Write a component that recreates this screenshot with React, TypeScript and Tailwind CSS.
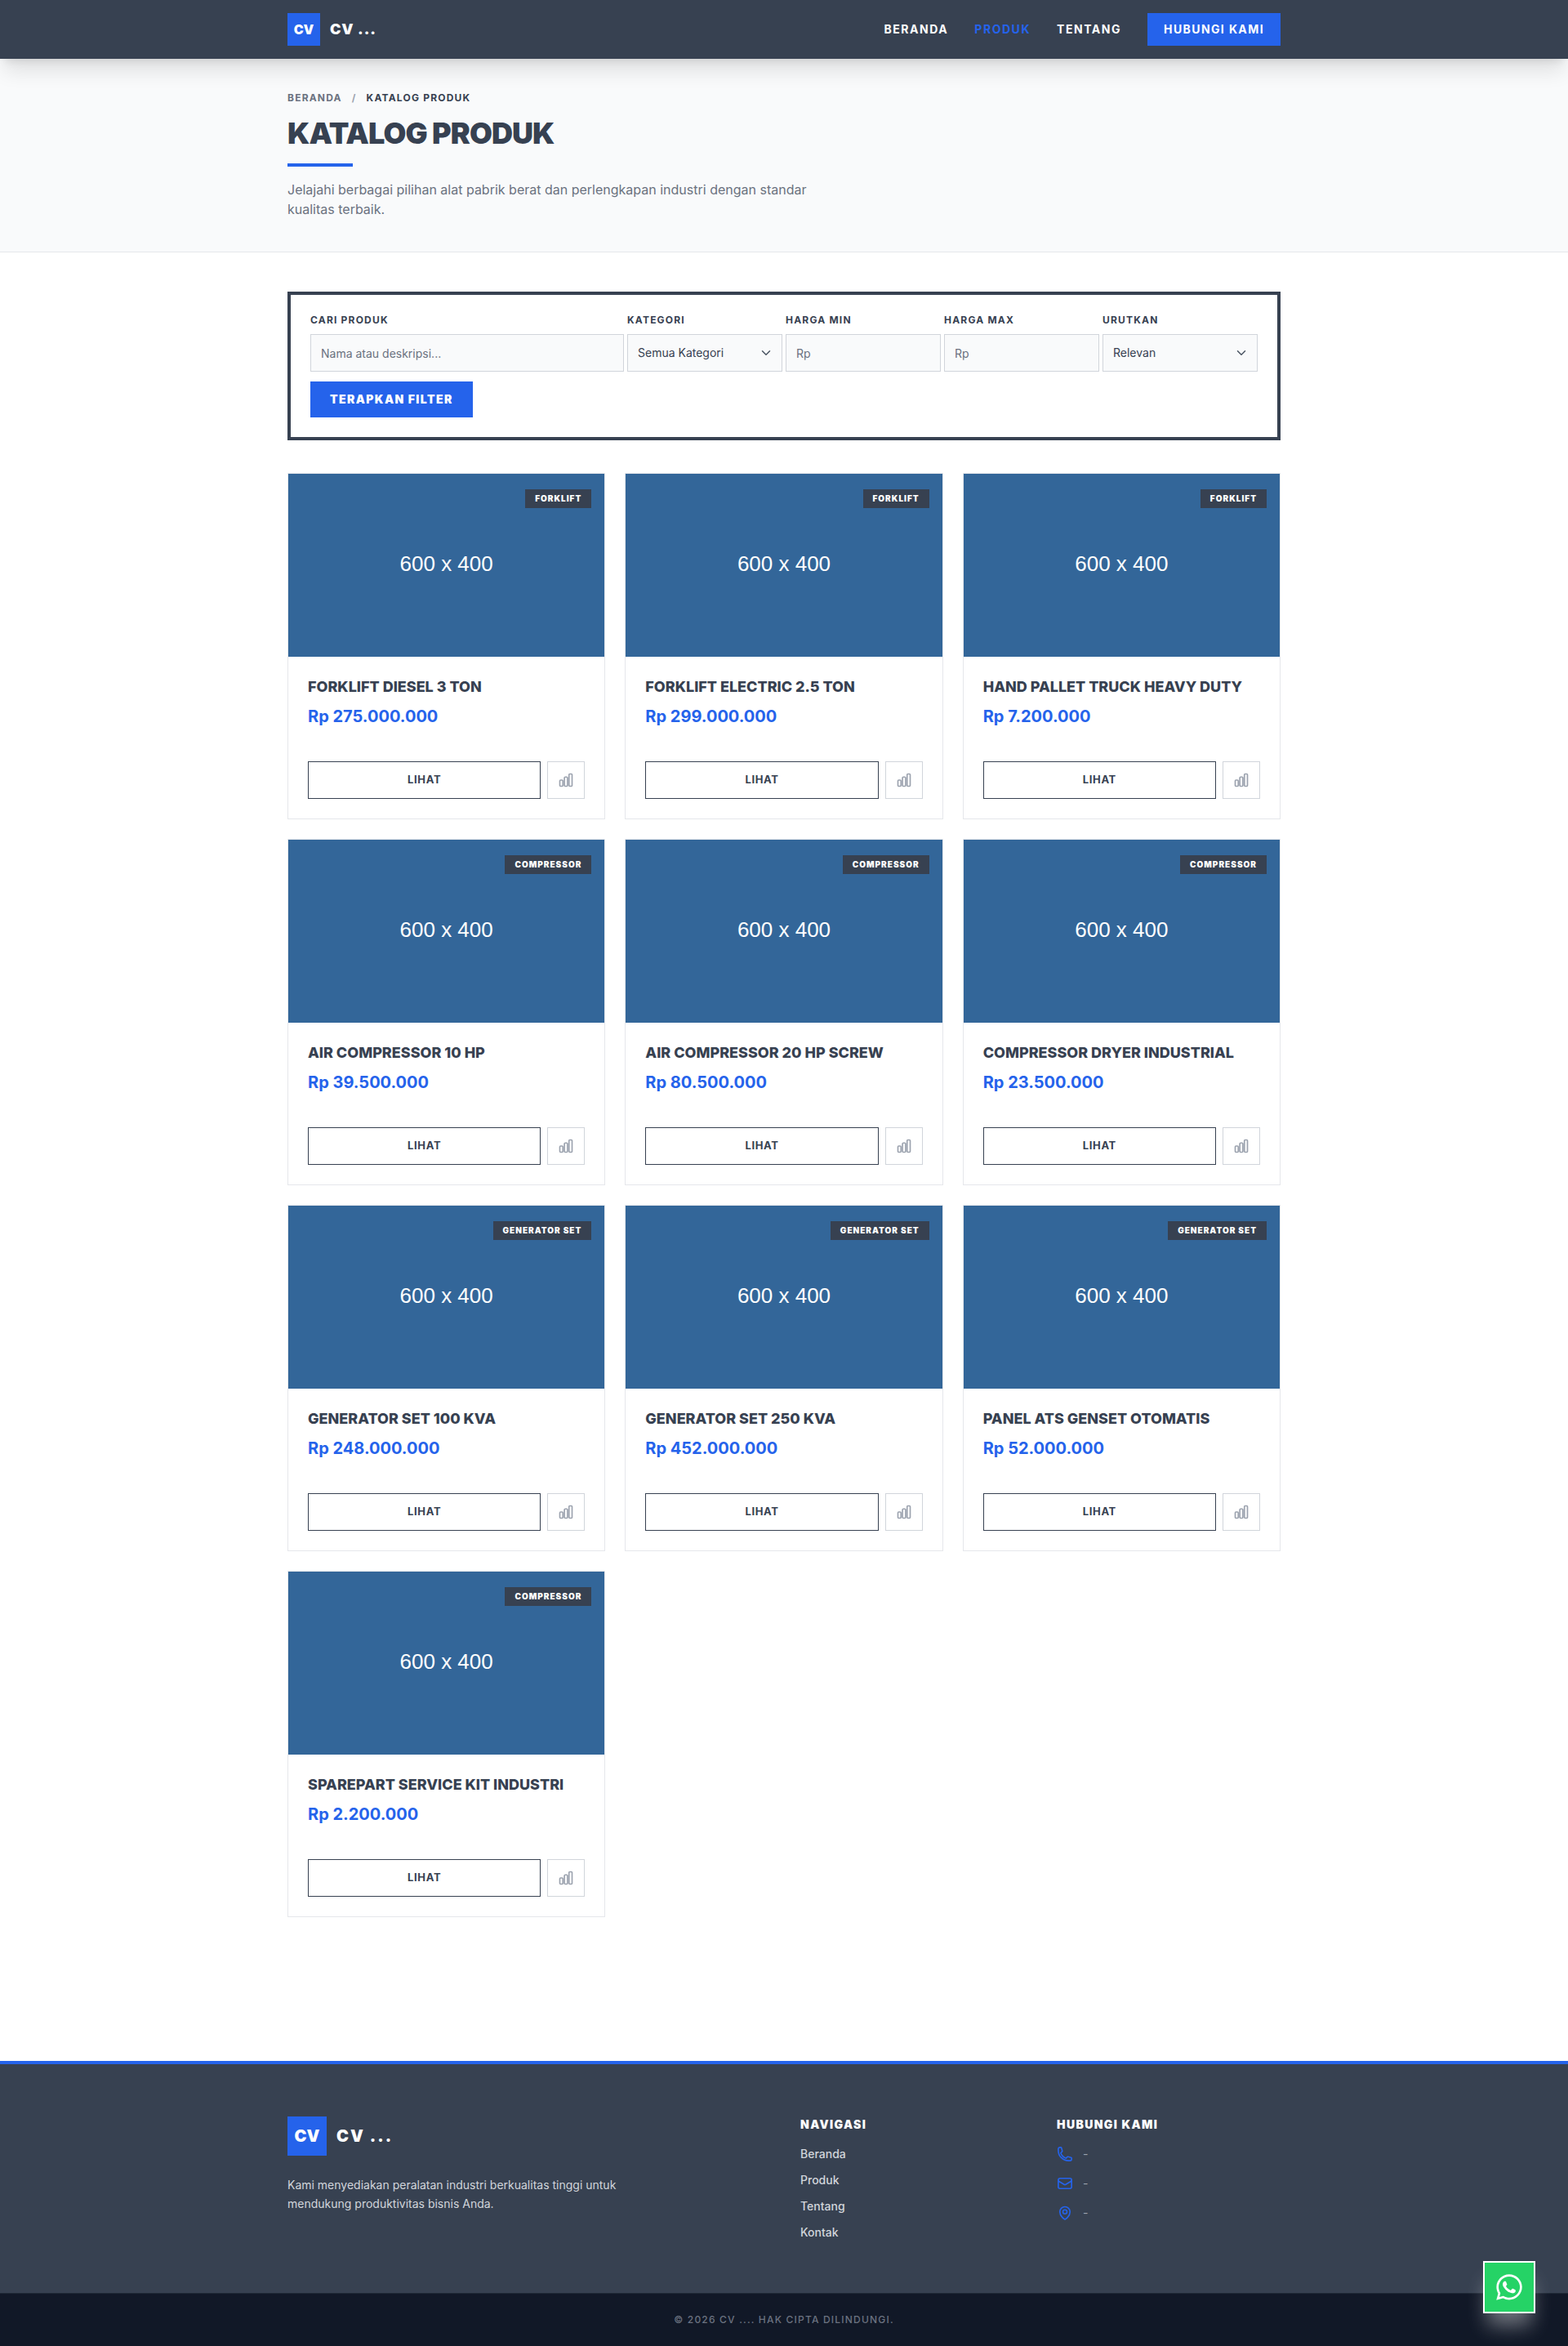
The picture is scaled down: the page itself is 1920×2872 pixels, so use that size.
import { FaWhatsapp } from 'react-icons/fa';
import { HiOutlineChartBar, HiOutlineEnvelope, HiOutlineMapPin, HiOutlinePhone } from 'react-icons/hi2';
import { ChevronDown } from 'lucide-react';

const products = [
  { name: 'Forklift Diesel 3 Ton', price: 'Rp 275.000.000', cat: 'Forklift' },
  { name: 'Forklift Electric 2.5 Ton', price: 'Rp 299.000.000', cat: 'Forklift' },
  { name: 'Hand Pallet Truck Heavy Duty', price: 'Rp 7.200.000', cat: 'Forklift' },
  { name: 'Air Compressor 10 HP', price: 'Rp 39.500.000', cat: 'Compressor' },
  { name: 'Air Compressor 20 HP Screw', price: 'Rp 80.500.000', cat: 'Compressor' },
  { name: 'Compressor Dryer Industrial', price: 'Rp 23.500.000', cat: 'Compressor' },
  { name: 'Generator Set 100 KVA', price: 'Rp 248.000.000', cat: 'Generator Set' },
  { name: 'Generator Set 250 KVA', price: 'Rp 452.000.000', cat: 'Generator Set' },
  { name: 'Panel ATS Genset Otomatis', price: 'Rp 52.000.000', cat: 'Generator Set' },
  { name: 'Sparepart Service Kit Industri', price: 'Rp 2.200.000', cat: 'Compressor' },
];

const inputClass = 'w-full h-[46px] px-3 border border-[#d1d5db] bg-[#f9fafb] text-sm text-[#374151] placeholder:text-[#6b7280] outline-none';
const labelClass = 'block mb-[10px] h-[14px] leading-[14px] text-xs font-bold uppercase tracking-[0.1em] text-[#374151]';

function Select({ value }: { value: string }) {
  return (
    <div className="relative">
      <select className={inputClass + ' appearance-none'}><option>{value}</option></select>
      <ChevronDown className="absolute right-[11px] top-[14px] w-[18px] h-[18px] text-[#4b5563] pointer-events-none" />
    </div>
  );
}

function ProductCard({ name, price, cat }: { name: string; price: string; cat: string }) {
  return (
    <div className="bg-white border border-[#e5e7eb] flex flex-col h-[424px]">
      <div className="relative h-56 bg-[#336699] flex items-center justify-center">
        <span className="font-['Liberation_Sans',sans-serif] text-[26px] text-white -mt-1">600 x 400</span>
        <span className="absolute top-[19px] right-4 h-[23px] px-3 bg-[#374151] text-white text-[10px] leading-[23px] font-black uppercase tracking-[0.1em]">{cat}</span>
      </div>
      <div className="flex-1 p-6 flex flex-col">
        <h3 className="text-lg leading-[26px] font-extrabold uppercase text-[#374151]">{name}</h3>
        <div className="mt-[9px] text-xl leading-7 font-bold text-[#2563eb]">{price}</div>
        <div className="mt-auto flex gap-2">
          <button className="flex-1 h-[46px] border border-[#374151] text-[13px] font-bold uppercase tracking-wider text-[#374151]">Lihat</button>
          <button className="w-[46px] h-[46px] border border-[#d1d5db] flex items-center justify-center text-[#9ca3af]">
            <HiOutlineChartBar strokeWidth={2} className="w-5 h-5" />
          </button>
        </div>
      </div>
    </div>
  );
}

export default function App() {
  return (
    <div className="font-[Inter,sans-serif] bg-white min-h-[2872px] flex flex-col">
      <header className="sticky top-0 z-20 bg-[#374151] shadow-xl">
        <div className="max-w-7xl mx-auto px-8 h-[72px] flex items-center justify-between">
          <div className="flex items-center gap-3">
            <div className="w-10 h-10 bg-[#2563eb] text-white flex items-center justify-center text-base font-black">CV</div>
            <span className="text-white text-lg font-black tracking-[0.05em]">CV ...</span>
          </div>
          <nav className="flex items-center gap-8 text-sm font-bold uppercase tracking-[0.11em] text-white">
            <a>Beranda</a>
            <a className="text-[#2563eb]">Produk</a>
            <a>Tentang</a>
            <a className="h-10 px-5 bg-[#2563eb] flex items-center tracking-[0.1em]">Hubungi Kami</a>
          </nav>
        </div>
      </header>

      <section className="bg-[#f9fafb] border-b border-[#e5e7eb] h-[237px]">
        <div className="max-w-7xl mx-auto px-8 pt-10">
          <div className="flex items-center gap-3 h-4 text-xs font-bold uppercase tracking-[0.1em]">
            <span className="text-[#6b7280]">Beranda</span>
            <span className="text-[#9ca3af]">/</span>
            <span className="text-[#374151]">Katalog Produk</span>
          </div>
          <h1 className="mt-[15px] text-4xl leading-10 font-black uppercase tracking-tight text-[#374151]">Katalog Produk</h1>
          <div className="mt-[17px] w-20 h-1 bg-[#2563eb]" />
          <p className="mt-4 max-w-2xl text-base leading-6 text-[#6b7280]">Jelajahi berbagai pilihan alat pabrik berat dan perlengkapan industri dengan standar kualitas terbaik.</p>
        </div>
      </section>

      <main className="flex-1 max-w-7xl w-full mx-auto px-8 pt-12 pb-[176px]">
        <form className="border-4 border-[#374151] p-6 mb-10">
          <div className="grid grid-cols-6 gap-1">
            <div className="col-span-2">
              <label className={labelClass}>Cari Produk</label>
              <input className={inputClass} placeholder="Nama atau deskripsi..." />
            </div>
            <div>
              <label className={labelClass}>Kategori</label>
              <Select value="Semua Kategori" />
            </div>
            <div>
              <label className={labelClass}>Harga Min</label>
              <input className={inputClass} placeholder="Rp" />
            </div>
            <div>
              <label className={labelClass}>Harga Max</label>
              <input className={inputClass} placeholder="Rp" />
            </div>
            <div>
              <label className={labelClass}>Urutkan</label>
              <Select value="Relevan" />
            </div>
          </div>
          <button type="button" className="mt-3 h-11 px-6 bg-[#2563eb] text-white text-sm font-black uppercase tracking-[0.1em]">Terapkan Filter</button>
        </form>

        <div className="grid grid-cols-3 gap-6">
          {products.map(p => <ProductCard key={p.name} {...p} />)}
        </div>
      </main>

      <footer className="bg-[#374151] border-t-4 border-[#2563eb]">
        <div className="max-w-7xl mx-auto px-8 pt-16 h-[280px] grid grid-cols-4 gap-10">
          <div className="col-span-2">
            <div className="flex items-center gap-3">
              <div className="w-12 h-12 bg-[#2563eb] text-white flex items-center justify-center text-xl font-black">CV</div>
              <span className="text-white text-xl font-black tracking-widest">CV ...</span>
            </div>
            <p className="mt-6 max-w-md text-sm leading-[23px] text-[#d1d5db]">Kami menyediakan peralatan industri berkualitas tinggi untuk mendukung produktivitas bisnis Anda.</p>
          </div>
          <div>
            <h4 className="text-sm leading-5 font-black uppercase tracking-[0.1em] text-white">Navigasi</h4>
            <ul className="mt-[16px] flex flex-col gap-3 text-sm leading-5 font-medium text-[#d1d5db]">
              <li>Beranda</li>
              <li>Produk</li>
              <li>Tentang</li>
              <li>Kontak</li>
            </ul>
          </div>
          <div>
            <h4 className="text-sm leading-5 font-black uppercase tracking-[0.1em] text-white">Hubungi Kami</h4>
            <ul className="mt-[16px] flex flex-col gap-4 text-sm leading-5 text-[#9ca3af]">
              <li className="flex items-center gap-3"><HiOutlinePhone strokeWidth={2} className="w-5 h-5 text-[#2563eb]" />-</li>
              <li className="flex items-center gap-3"><HiOutlineEnvelope strokeWidth={2} className="w-5 h-5 text-[#2563eb]" />-</li>
              <li className="flex items-center gap-3"><HiOutlineMapPin strokeWidth={2} className="w-5 h-5 text-[#2563eb]" />-</li>
            </ul>
          </div>
        </div>
        <div className="bg-[#111827] border-t border-[#1f2937] h-[65px] flex items-center justify-center text-xs font-medium uppercase tracking-widest text-[#6b7280]">
          © 2026 CV .... Hak Cipta Dilindungi.
        </div>
      </footer>

      <a className="fixed right-10 bottom-10 z-30 w-16 h-16 bg-[#25D366] border-2 border-white text-white flex items-center justify-center shadow-[0_20px_25px_-5px_rgba(255,255,255,0.4)]">
        <FaWhatsapp className="w-9 h-9" />
      </a>
    </div>
  );
}
